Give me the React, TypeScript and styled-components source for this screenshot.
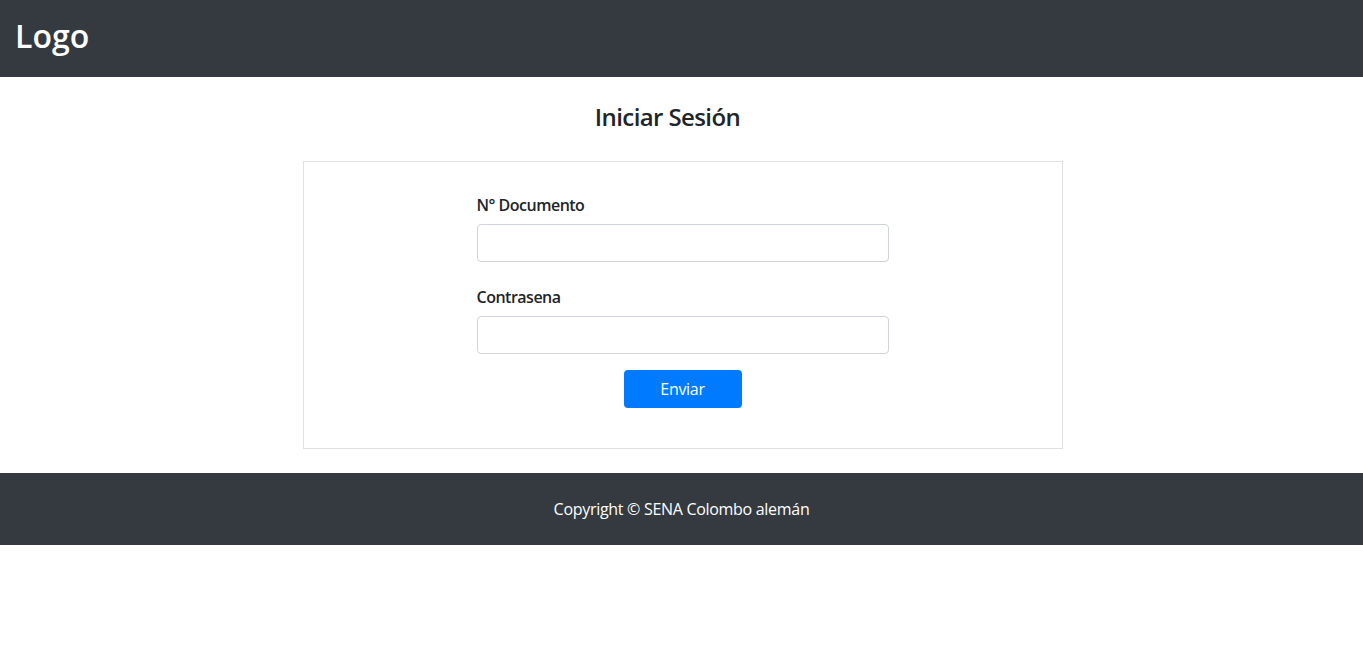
import React from "react";
import styled, { createGlobalStyle } from "styled-components";

const Global = createGlobalStyle`
  html, body { margin: 0; padding: 0; background: #fff; }
  body { font-family: "Segoe UI", "Open Sans", "Noto Sans", sans-serif; color: #212529; font-size: 16px; line-height: 1.5; letter-spacing: -0.3px; }
  * { box-sizing: border-box; }
`;

const Header = styled.header`
  height: 77px;
  background: #343a40;
  display: flex;
  align-items: center;
  padding: 0 15px;
`;

const Logo = styled.h1`
  margin: 0 0 4px;
  color: #fff;
  font-size: 32px;
  font-weight: 600;
  line-height: 1.2;
  letter-spacing: 0;
`;

const Main = styled.main`
  display: flex;
  flex-direction: column;
  align-items: center;
  padding: 26px 0 24px 2px;
`;

const Title = styled.h4`
  margin: 0 30px 29px 0;
  font-size: 24px;
  font-weight: 600;
  line-height: 1.2;
  letter-spacing: -0.6px;
`;

const Card = styled.div`
  width: 760px;
  border: 1px solid #dee2e6;
  padding: 31px 0 40px;
  display: flex;
  justify-content: center;
`;

const Form = styled.form`
  width: 412px;
  display: flex;
  flex-direction: column;
`;

const Group = styled.div<{ $mb: number }>`
  display: flex;
  flex-direction: column;
  margin-bottom: ${(p) => p.$mb}px;
`;

const Label = styled.label`
  font-size: 16px;
  font-weight: 600;
  line-height: 24px;
  margin-bottom: 7px;
  letter-spacing: -0.5px;
`;

const Input = styled.input`
  height: 38px;
  border: 1px solid #ced4da;
  border-radius: 4px;
  padding: 6px 12px;
  font-size: 16px;
  font-family: inherit;
  outline: none;
`;

const Button = styled.button`
  align-self: center;
  width: 118px;
  height: 38px;
  border: none;
  border-radius: 4px;
  background: #007bff;
  color: #fff;
  font-family: inherit;
  font-size: 16px;
  letter-spacing: -0.3px;
  cursor: pointer;
`;

const Footer = styled.footer`
  height: 72px;
  background: #343a40;
  color: #fff;
  display: flex;
  align-items: center;
  justify-content: center;
  font-size: 16px;
`;

export default function App() {
  return (
    <>
      <Global />
      <Header>
        <Logo>Logo</Logo>
      </Header>
      <Main>
        <Title>Iniciar Sesión</Title>
        <Card>
          <Form onSubmit={(e) => e.preventDefault()}>
            <Group $mb={23}>
              <Label>N° Documento</Label>
              <Input type="text" />
            </Group>
            <Group $mb={16}>
              <Label>Contrasena</Label>
              <Input type="password" />
            </Group>
            <Button type="submit">Enviar</Button>
          </Form>
        </Card>
      </Main>
      <Footer>Copyright © SENA Colombo alemán</Footer>
    </>
  );
}
